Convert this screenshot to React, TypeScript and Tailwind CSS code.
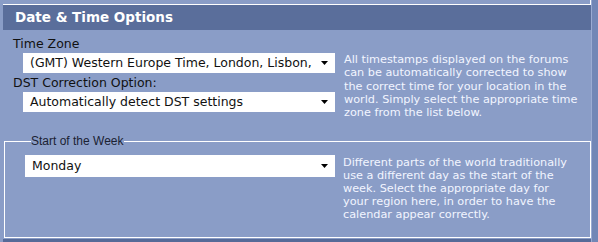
import React from 'react';

const SelectBox: React.FC<{ value: string; className?: string }> = ({ value, className }) => (
  <div
    className={`flex items-center justify-between bg-white pl-[7px] pr-[7px] text-[12.5px] text-[#111] ${className ?? ''}`}>
    <span className="whitespace-nowrap leading-[16px]">{value}</span>
    <svg width="7" height="4" viewBox="0 0 7 4" className="ml-2 shrink-0">
      <path d="M0 0h7L3.5 4z" fill="#000" />
    </svg>
  </div>
);

const App: React.FC = () => {
  return (
    <div
      className="flex h-[242px] w-[598px] overflow-hidden bg-[#8a9dc7]"
      style={{ fontFamily: '"DejaVu Sans", Verdana, sans-serif' }}>
      <div className="w-[3px] shrink-0" />
      <div className="flex w-[588px] flex-col">
        <div className="h-[5px] border-b border-r border-white" />
        <div className="flex h-[25px] items-center bg-[#5a6e9b] pl-[12px] text-[13.5px] font-bold text-white">
          Date &amp; Time Options
        </div>

        <div className="flex h-[105px] pt-[5px]">
          <div className="flex w-[332px] flex-col pl-[10px]">
            <div className="h-[17px] text-[12.5px] leading-[17px] text-[#111]">Time Zone</div>
            <SelectBox value="(GMT) Western Europe Time, London, Lisbon," className="ml-[10px] mt-[1px] h-[20px]" />
            <div className="mt-[1px] h-[17px] text-[12.5px] leading-[17px] text-[#111]">DST Correction Option:</div>
            <SelectBox value="Automatically detect DST settings" className="ml-[10px] mt-[1px] h-[20px]" />
          </div>
          <p className="ml-[9px] w-[236px] pt-[18px] text-[11.25px] leading-[13.3px] text-[#f2f5ff]">
            All timestamps displayed on the forums can be automatically corrected to show the correct
            time for your location in the world. Simply select the appropriate time zone from the list
            below.
          </p>
        </div>

        <fieldset className="ml-[1px] h-[103px] border border-white pl-[20px] pt-[7px]">
          <legend
            className="ml-[6px] px-0 text-[12px] leading-[13px] text-[#1b2233]"
            style={{ fontFamily: '"Liberation Sans", Arial, sans-serif' }}>
            Start of the Week
          </legend>
          <div className="flex">
            <SelectBox value="Monday" className="h-[22px] w-[310px]" />
            <p className="ml-[8px] w-[233px] pt-[1px] text-[11.25px] leading-[13px] text-[#f2f5ff]">
              Different parts of the world traditionally use a different day as the start of the week.
              Select the appropriate day for your region here, in order to have the calendar appear
              correctly.
            </p>
          </div>
        </fieldset>
        <div className="mt-[1px] flex-1 bg-[#566a98]" />
      </div>
      <div className="flex-1 border-l border-[#9aabd2] bg-[#7287b6]" />
    </div>
  );
};

export default App;
